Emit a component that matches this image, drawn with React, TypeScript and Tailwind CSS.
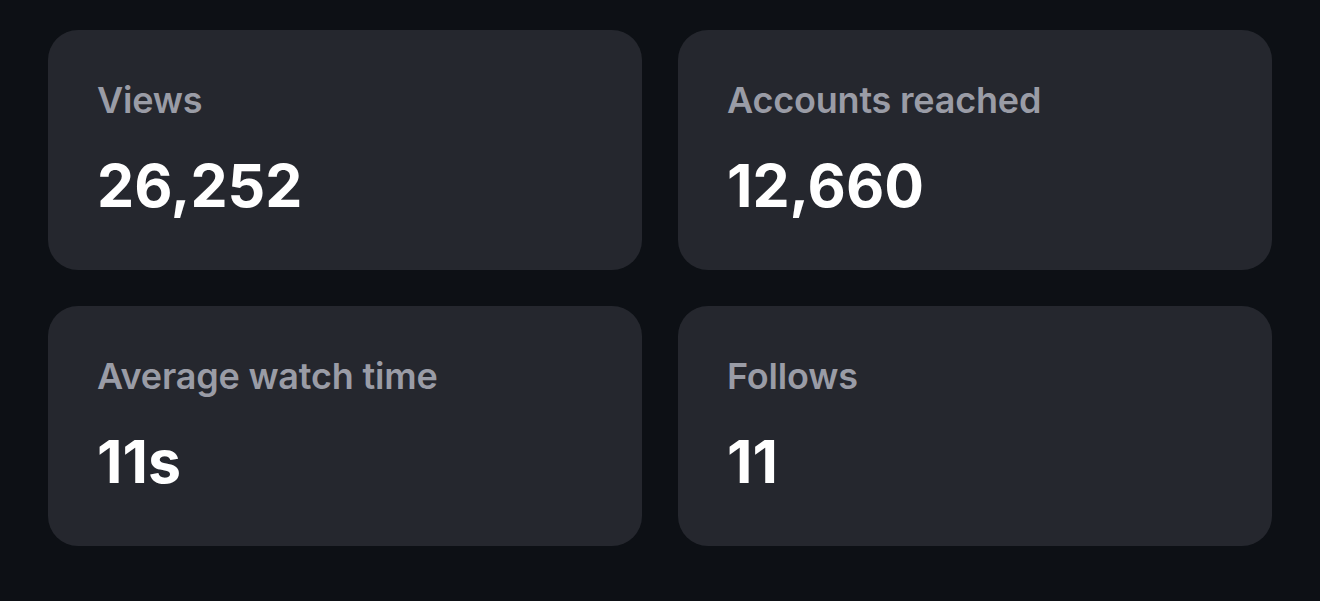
const STATS = [
  { label: "Views", value: "26,252" },
  { label: "Accounts reached", value: "12,660" },
  { label: "Average watch time", value: "11s" },
  { label: "Follows", value: "11" },
]

function StatCard({ label, value }: { label: string; value: string }) {
  return (
    <div className="h-[240px] rounded-[30px] bg-[#25272e] pl-[49px] pt-[48px]">
      <div className="text-[36px] leading-[44px] font-semibold text-[#9a9ca6] tracking-[-0.2px]">{label}</div>
      <div className="mt-[28px] text-[59px] leading-[72px] font-bold text-white tracking-[0px]">{value}</div>
    </div>
  )
}

export default function App() {
  return (
    <div
      className="w-[1320px] h-[601px] bg-[#0d1015] px-[48px] pt-[30px]"
      style={{ fontFamily: "Inter, 'Noto Sans', sans-serif" }}
    >
      <div className="grid grid-cols-2 gap-[36px]">
        {STATS.map((s) => (
          <StatCard key={s.label} label={s.label} value={s.value} />
        ))}
      </div>
    </div>
  )
}
